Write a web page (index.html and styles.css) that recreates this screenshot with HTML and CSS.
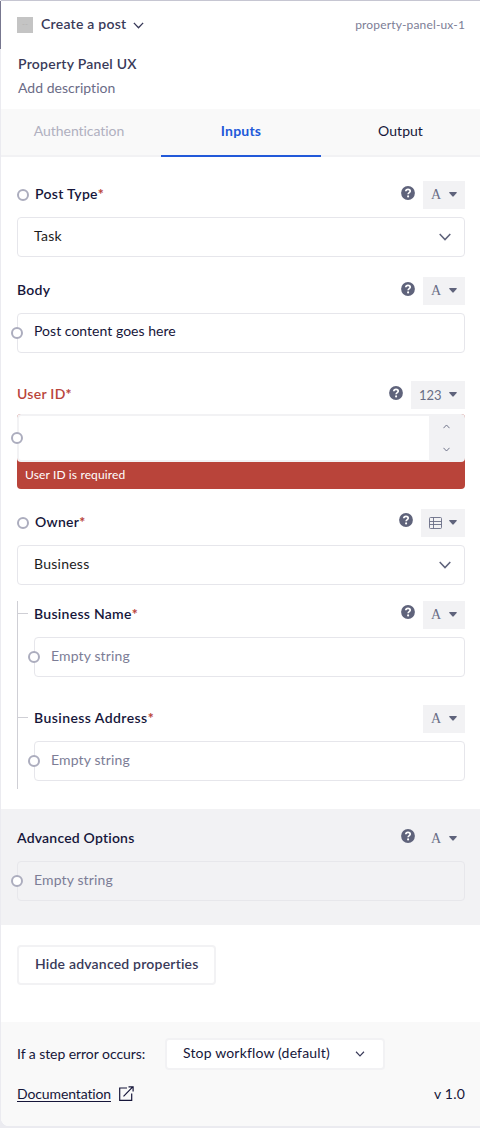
FILE: index.html
```html
<!DOCTYPE html>
<html lang="en">
<head>
<meta charset="utf-8">
<title>Property Panel UX</title>
<link rel="stylesheet" href="styles.css">
</head>
<body>
<svg class="sprite" aria-hidden="true">
  <symbol id="help" viewBox="0 0 14 14"><circle cx="7" cy="7" r="6.9" fill="#5f637b"/><path d="M4.800 5.300C4.900 4 5.800 3.400 7 3.400C8.400 3.400 9.200 4.100 9.200 5.200C9.200 6.600 7.100 6.600 7.100 8.300" fill="none" stroke="#fff" stroke-width="1.700"/><circle cx="7.100" cy="10.400" r="1.050" fill="#fff"/></symbol>
  <symbol id="caret" viewBox="0 0 8 5"><path d="M.7 0h6.600q.9.200.300 1L4.700 4.300q-.7.700-1.400 0L.4 1Q-.2.200.700 0z" fill="#5f637b"/></symbol>
  <symbol id="chevron" viewBox="0 0 12 8"><path d="M.7 1 6 6.600 11.300 1" fill="none" stroke="currentColor" stroke-width="1.500"/></symbol>
</svg>
<main class="panel">
  <header class="header">
    <div class="header-top">
      <span class="thumb">--</span>
      <span class="step">Create a post</span>
      <svg class="step-chevron"><use href="#chevron"/></svg>
      <span class="slug">property-panel-ux-1</span>
    </div>
    <div class="title">Property Panel UX</div>
    <div class="description">Add description</div>
  </header>

  <nav class="tabs">
    <span class="tab disabled">Authentication</span>
    <span class="tab active">Inputs</span>
    <span class="tab">Output</span>
  </nav>

  <section class="fields">
    <div class="field">
      <div class="label-row">
        <i class="port"></i><span class="label">Post Type<b class="req">*</b></span>
        <svg class="help"><use href="#help"/></svg>
        <span class="type"><span class="letter">A</span><svg class="caret"><use href="#caret"/></svg></span>
      </div>
      <div class="input select"><span>Task</span><svg class="chevron"><use href="#chevron"/></svg></div>
    </div>

    <div class="field">
      <div class="label-row">
        <span class="label">Body</span>
        <svg class="help"><use href="#help"/></svg>
        <span class="type"><span class="letter">A</span><svg class="caret"><use href="#caret"/></svg></span>
      </div>
      <div class="input body-input"><i class="port edge"></i><span>Post content goes here</span></div>
    </div>

    <div class="field invalid">
      <div class="label-row">
        <span class="label">User ID<b class="req">*</b></span>
        <svg class="help"><use href="#help"/></svg>
        <span class="type"><span class="digits">123</span><svg class="caret"><use href="#caret"/></svg></span>
      </div>
      <div class="error-box">
        <div class="number">
          <i class="port edge"></i>
          <div class="stepper">
            <svg class="up" viewBox="0 0 12 8"><use href="#chevron"/></svg>
            <svg class="down" viewBox="0 0 12 8"><use href="#chevron"/></svg>
          </div>
        </div>
        <div class="error">User ID is required</div>
      </div>
    </div>

    <div class="field owner">
      <div class="label-row">
        <i class="port"></i><span class="label">Owner<b class="req">*</b></span>
        <svg class="help high"><use href="#help"/></svg>
        <span class="type"><svg class="table" viewBox="0 0 13 12"><path d="M.5 1.500q0-1 1-1h10q1 0 1 1v9q0 1-1 1h-10q-1 0-1-1zM.5 4.500h12M.5 7.500h12M4.500.5v11" fill="none" stroke="#696d86" stroke-width=".9"/></svg><svg class="caret"><use href="#caret"/></svg></span>
      </div>
      <div class="input select"><span>Business</span><svg class="chevron"><use href="#chevron"/></svg></div>
    </div>

    <div class="tree">
      <div class="field branch">
        <div class="label-row">
          <span class="label">Business Name<b class="req">*</b></span>
          <svg class="help high"><use href="#help"/></svg>
          <span class="type"><span class="letter">A</span><svg class="caret"><use href="#caret"/></svg></span>
        </div>
        <div class="input empty"><i class="port edge"></i><span>Empty string</span></div>
      </div>
      <div class="field branch">
        <div class="label-row">
          <span class="label address">Business Address<b class="req">*</b></span>
          <span class="type"><span class="letter">A</span><svg class="caret"><use href="#caret"/></svg></span>
        </div>
        <div class="input empty"><i class="port edge"></i><span>Empty string</span></div>
      </div>
    </div>
  </section>

  <section class="advanced">
    <div class="label-row">
      <span class="label">Advanced Options</span>
      <svg class="help high"><use href="#help"/></svg>
      <span class="type"><span class="letter">A</span><svg class="caret"><use href="#caret"/></svg></span>
    </div>
    <div class="input empty"><i class="port edge"></i><span>Empty string</span></div>
  </section>

  <div class="actions"><span class="button">Hide advanced properties</span></div>

  <footer class="footer">
    <div class="error-row">
      <span class="error-label">If a step error occurs:</span>
      <div class="error-select"><span>Stop workflow (default)</span><svg><use href="#chevron"/></svg></div>
    </div>
    <div class="doc-row">
      <span class="doc">Documentation</span>
      <svg class="external" viewBox="0 0 15 15"><path d="M8 2H.700v12.300h12V7.500M4.500 10.300 13.500 1.200M9.500.8h4.600v4.700" fill="none" stroke="#16163a" stroke-width="1.200"/></svg>
      <span class="version">v 1.0</span>
    </div>
  </footer>
</main>
</body>
</html>
```

FILE: styles.css
```css
* { box-sizing: border-box; }

body {
  margin: 0;
  background: #ebebf0;
  font: 14px/20px Lato, sans-serif;
  font-variant-ligatures: none;
  letter-spacing: .03px;
  color: #16163a;
}

svg { display: block; flex: none; }
.sprite { position: absolute; width: 0; height: 0; }

.panel {
  height: 1126px;
  margin-left: 1px;
  background: #fff;
  border-top: 1px solid #c6c6d2;
  border-radius: 0 0 0 8px;
  box-shadow: -1px 0 #ebebf0;
  overflow: hidden;
}

body::before {
  content: "";
  position: absolute;
  top: 1px;
  left: 0;
  width: 1px;
  height: 48px;
  background: #77778f;
}

/* Header */
.header { height: 108px; padding: 13px 15px 0 16px; }
.header-top { display: flex; align-items: center; height: 20px; }
.thumb {
  width: 16px;
  height: 16px;
  margin: 2px 8px 0 0;
  background: #c4c4c4;
  color: #b3b3b3;
  font-size: 8px;
  line-height: 14px;
  text-align: center;
}
.step, .title { font-weight: 600; letter-spacing: .25px; color: #393a59; }
.step-chevron { width: 11px; height: 7px; margin: 2px 0 0 7px; color: #393a59; }
.slug { margin: 2px 0 0 auto; font-size: 12px; letter-spacing: .15px; color: #7c7d96; }
.title { margin: 20px 0 0 1px; }
.description { margin: 4px 0 0 1px; color: #6b6c87; }

/* Tabs */
.tabs { display: grid; grid-template-columns: 160px 160px 1fr; height: 48px; background: #f9f9f9; }
.tab { padding-top: 12px; text-align: center; border-bottom: 2px solid #f2f2f4; }
.tab.disabled { padding-right: 4px; letter-spacing: -.05px; color: #b0b0c0; }
.tab.active { font-weight: 700; letter-spacing: .2px; color: #2259d9; border-color: #2259d9; }

/* Fields */
.fields { height: 652px; padding: 24px 15px 0 16px; }
.field { margin-bottom: 20px; }
.label-row { display: flex; align-items: center; height: 28px; margin-bottom: 8px; }
.label { margin-right: auto; padding-bottom: 2px; font-weight: 600; letter-spacing: .28px; }
.label.address { letter-spacing: .43px; }
.req { color: #b9443a; }
.port {
  flex: none;
  width: 12px;
  height: 12px;
  margin-right: 6px;
  background: #fff;
  border: 2px solid #acadbe;
  border-radius: 50%;
}
.port.edge { position: absolute; left: -7px; top: 13px; margin: 0; }
.help { width: 14px; height: 14px; margin: 0 8px 4px 0; }
.help.high { margin-bottom: 6px; }
.type {
  display: flex;
  align-items: center;
  justify-content: space-between;
  height: 28px;
  padding: 0 8px;
  gap: 8px;
  background: #f2f2f4;
  color: #696d86;
}
.letter { width: 10px; font: 14px/28px "Liberation Serif", serif; letter-spacing: 0; }
.digits { width: 22px; font-size: 13px; letter-spacing: -.1px; }
.table { width: 13px; height: 12px; margin-right: -1px; }
.caret { width: 8px; height: 5px; margin-top: -1px; }

.input {
  position: relative;
  display: flex;
  align-items: center;
  height: 40px;
  padding: 0 13px 2px 16px;
  border: 1px solid #e6e6eb;
  border-radius: 4px;
}
.select { justify-content: space-between; letter-spacing: .25px; color: #1c1c1c; }
.chevron { width: 12px; height: 8px; margin-top: 2px; color: #5f637b; }
.body-input { padding-bottom: 4px; }
.empty { color: #7c7d96; letter-spacing: .13px; }

/* Number field with its validation message */
.invalid { margin-top: 28px; }
.invalid .label-row { margin-bottom: 5px; }
.invalid .label { color: #b9443a; }
.error-box { height: 75px; background: #b9443a; border-radius: 4px; }
.number {
  position: relative;
  display: flex;
  justify-content: flex-end;
  height: 48px;
  background: #fff;
  border: 2px solid #f2f2f4;
  border-radius: 4px;
}
.number .port.edge { left: -8px; top: 16px; }
.stepper {
  display: flex;
  flex-direction: column;
  align-items: center;
  justify-content: space-between;
  width: 34px;
  padding: 8px 0;
  background: #f2f2f4;
  color: #5f637b;
}
.stepper svg { width: 7px; height: 5px; }
.up { transform: rotate(180deg); }
.error { padding: 3px 8px; font-size: 12px; letter-spacing: .13px; color: #fff; }
.owner { margin-bottom: 16px; }

/* Nested fields */
.tree { height: 188px; padding-left: 16px; border-left: 1px solid #cfcfd5; }
.branch { position: relative; margin-bottom: 28px; }
.branch::before {
  content: "";
  position: absolute;
  left: -16px;
  top: 12px;
  width: 10px;
  height: 1px;
  background: #cfcfd5;
}

.advanced { height: 116px; padding: 16px 15px 0 16px; background: #f2f2f4; }
.advanced .label { letter-spacing: .2px; }
.advanced .input { border-color: #e7e7eb; }

.actions { height: 97px; padding: 20px 16px; }
.button {
  display: inline-block;
  height: 40px;
  padding: 7px 15px 0 16px;
  border: 2px solid #f2f2f4;
  border-radius: 4px;
  font-weight: 600;
  letter-spacing: .2px;
  color: #393a59;
}

/* Footer */
.footer { height: 104px; padding: 16px 15px 0 16px; background: #f9f9f9; }
.error-row, .doc-row { display: flex; align-items: center; }
.error-label { width: 148px; letter-spacing: -.06px; }
.error-select {
  display: flex;
  align-items: center;
  justify-content: space-between;
  width: 220px;
  height: 32px;
  padding: 0 18px 2px 16px;
  background: #fff;
  border: 2px solid #f2f2f4;
  border-radius: 4px;
  letter-spacing: .17px;
}
.error-select svg { width: 10px; height: 6px; margin-top: 1px; color: #393a59; }
.doc-row { margin-top: 13px; }
.doc { height: 18px; margin-bottom: 2px; line-height: 19px; letter-spacing: -.12px; border-bottom: 1px solid #16163a; }
.external { width: 15px; height: 15px; margin: 0 0 0 8px; }
.version { margin: 1px 0 0 auto; letter-spacing: .2px; }
```
